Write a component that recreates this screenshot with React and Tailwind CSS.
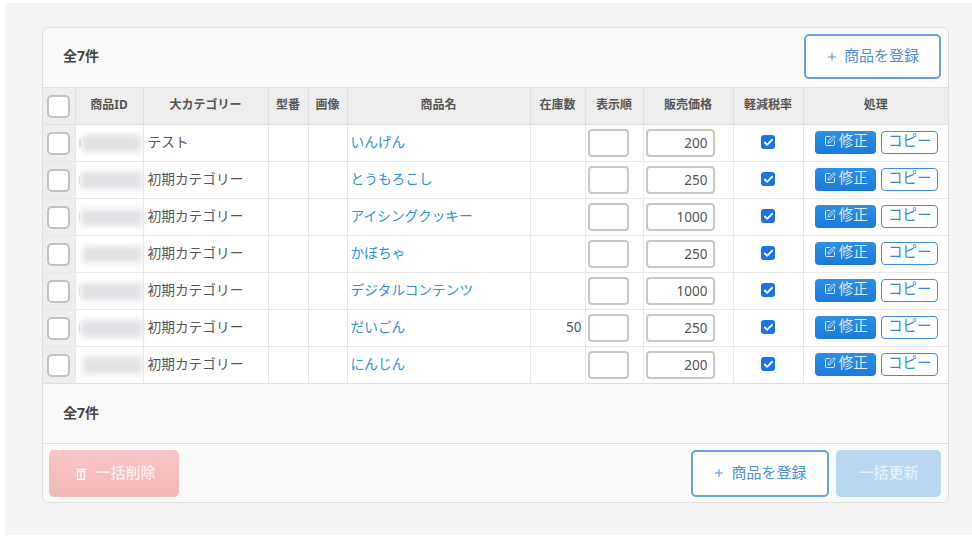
import { Plus, SquarePen, Check } from 'lucide-react';

const products = [
  { category: 'テスト', name: 'いんげん', price: '200', blur: 'w-[59px]', tick: true },
  { category: '初期カテゴリー', name: 'とうもろこし', price: '250', blur: 'w-[62px]', tick: true },
  { category: '初期カテゴリー', name: 'アイシングクッキー', price: '1000', blur: 'w-[62px]', tick: true },
  { category: '初期カテゴリー', name: 'かぼちゃ', price: '250', blur: 'w-[59px] ml-[4px]' },
  { category: '初期カテゴリー', name: 'デジタルコンテンツ', price: '1000', blur: 'w-[65px]', tick: true },
  { category: '初期カテゴリー', name: 'だいごん', price: '250', stock: '50', blur: 'w-[62px]', tick: true },
  { category: '初期カテゴリー', name: 'にんじん', price: '200', blur: 'w-[64px] ml-[4px]' },
];

const headers = ['商品ID', '大カテゴリー', '型番', '画像', '商品名', '在庫数', '表示順', '販売価格', '軽減税率', '処理'];

const Box = () => (
  <div className="w-[23px] h-[23px] ml-[4px] rounded-[5px] border-2 border-[#c2c2c2] bg-white" />
);

const RegisterButton = ({ className }) => (
  <button className={`flex items-center justify-center gap-[6px] rounded-[5px] border-2 border-[#62a2e2] bg-white text-[15px] text-[#4a8fd6] ${className}`}>
    <Plus className="w-[12px] h-[12px]" strokeWidth={2} />
    <span className="pb-[2px]">商品を登録</span>
  </button>
);

const TrashIcon = () => (
  <svg width="10" height="13" viewBox="0 0 10 13" fill="none" stroke="white" strokeWidth="1.4">
    <path d="M0 2.5h10" strokeWidth="1.6" />
    <path d="M1.5 4.5h7v8h-7z" />
    <path d="M5 5.5v6" />
  </svg>
);

export default function App() {
  return (
    <div className="h-[538px] bg-white pl-[5px] pt-[3px] pb-[3px] font-['Noto_Sans','Noto_Sans_CJK_JP',sans-serif]">
      <div className="h-full bg-[#f5f5f5] pl-[37px] pr-[23px] pt-[24px]">
        <div className="h-[476px] rounded-[6px] border border-[#dfdfdf] bg-[#fafafa] overflow-hidden">
          {/* Top bar */}
          <div className="h-[59px] flex items-center justify-between pl-[20px] pr-[7px] pb-[2px]">
            <span className="text-[14px] font-bold text-[#444] pb-[2px]">全7件</span>
            <RegisterButton className="w-[137px] h-[45px]" />
          </div>

          {/* Table */}
          <table className="w-full table-fixed border-collapse bg-white text-[13.7px] text-[#555]">
            <colgroup>
              <col className="w-[32px]" />
              <col className="w-[68px]" />
              <col className="w-[125px]" />
              <col className="w-[40px]" />
              <col className="w-[39px]" />
              <col className="w-[183px]" />
              <col className="w-[55px]" />
              <col className="w-[58px]" />
              <col className="w-[90px]" />
              <col className="w-[70px]" />
              <col />
            </colgroup>
            <thead>
              <tr className="h-[37px] bg-[#eeeeee] border-y border-[#dfdfdf]">
                <th className="border-r border-[#dfdfdf] p-0"><Box /></th>
                {headers.map((h) => (
                  <th key={h} className="border-r last:border-r-0 border-[#dfdfdf] p-0 pb-[2px] text-[12px] font-bold text-[#555] whitespace-nowrap">{h}</th>
                ))}
              </tr>
            </thead>
            <tbody>
              {products.map((p) => (
                <tr key={p.name} className="h-[37px] border-b border-[#e8e8e8] last:border-[#dfdfdf]">
                  <td className="bg-[#eeeeee] border-r border-[#e8e8e8] p-0"><Box /></td>
                  <td className="border-r border-[#e8e8e8] p-0 pl-[3px]">
                    <div className="flex items-center gap-[1px]">
                      {p.tick && <div className="w-[2px] h-[8px] bg-[#e9dcae]" />}
                      <div className={`h-[17px] ${p.blur} bg-[#e2e2e6] blur-[3px]`} />
                    </div>
                  </td>
                  <td className="border-r border-[#e8e8e8] p-0 pl-[4px] pb-[2px] whitespace-nowrap">{p.category}</td>
                  <td className="border-r border-[#e8e8e8] p-0" />
                  <td className="border-r border-[#e8e8e8] p-0" />
                  <td className="border-r border-[#e8e8e8] p-0 pl-[3px] pb-[2px] text-[#2f8fe6]">{p.name}</td>
                  <td className="border-r border-[#e8e8e8] p-0 pr-[3px] pb-[1px] text-right text-[13.5px]">{p.stock}</td>
                  <td className="border-r border-[#e8e8e8] p-0 pl-[2px]">
                    <div className="w-[41px] h-[28px] rounded-[4px] border-2 border-[#c8c8c8] bg-white" />
                  </td>
                  <td className="border-r border-[#e8e8e8] p-0 pl-[2px]">
                    <div className="w-[69px] h-[28px] rounded-[4px] border-2 border-[#c8c8c8] bg-white flex items-center justify-end pr-[5px] text-[13.5px] text-[#555]">{p.price}</div>
                  </td>
                  <td className="border-r border-[#e8e8e8] p-0 pb-[2px]">
                    <div className="w-[14px] h-[14px] mx-auto rounded-[3px] bg-[#1a73e8] flex items-center justify-center">
                      <Check className="w-[11px] h-[11px] text-white" strokeWidth={4} />
                    </div>
                  </td>
                  <td className="p-0 pl-[2px] pb-[2px]">
                    <div className="flex justify-center gap-[5px]">
                      <button className="w-[61px] h-[23px] pb-[2px] rounded-[4px] bg-gradient-to-b from-[#2b90e8] to-[#1a7bd8] text-[#dcecfb] text-[14.5px] flex items-center justify-center gap-[3px]">
                        <SquarePen className="w-[12px] h-[12px]" strokeWidth={2} />
                        修正
                      </button>
                      <button className="w-[57px] h-[23px] pb-[2px] rounded-[4px] border border-[#3b8fdc] bg-white text-[#3b86d6] text-[14.5px] flex items-center justify-center">
                        コピー
                      </button>
                    </div>
                  </td>
                </tr>
              ))}
            </tbody>
          </table>

          {/* Bottom count */}
          <div className="h-[60px] flex items-center pl-[20px] pb-[2px] border-b border-[#dfdfdf]">
            <span className="text-[14px] font-bold text-[#444]">全7件</span>
          </div>

          {/* Actions */}
          <div className="flex items-center justify-between h-[58px] pl-[6px] pr-[7px]">
            <button className="w-[130px] h-[47px] pl-[4px] rounded-[5px] bg-gradient-to-b from-[#fcc4c6] to-[#f2b8b8] text-[#fdeeee] text-[15px] font-medium flex items-center justify-center gap-[9px]">
              <TrashIcon />
              <span className="pb-[2px]">一括削除</span>
            </button>
            <div className="flex gap-[7px]">
              <RegisterButton className="w-[138px] h-[47px]" />
              <button className="w-[105px] h-[47px] pb-[2px] rounded-[5px] bg-[#b7d7f3] text-[#e4f0fb] text-[15px] font-medium">一括更新</button>
            </div>
          </div>
        </div>
      </div>
    </div>
  );
}
